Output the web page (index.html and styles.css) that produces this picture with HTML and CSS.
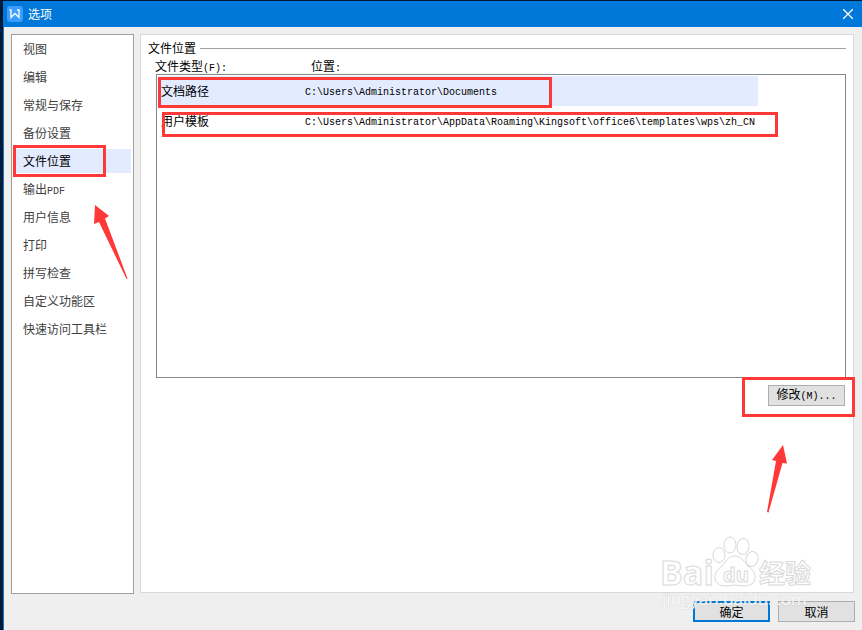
FILE: index.html
```html
<!DOCTYPE html>
<html lang="zh-CN">
<head>
<meta charset="utf-8">
<title>选项</title>
<link rel="stylesheet" href="styles.css">
</head>
<body>
<div class="dialog">
  <header class="titlebar">
    <svg class="logo" viewBox="0 0 16 16" aria-hidden="true">
      <rect width="16" height="16" rx="3" fill="#3b9dff"/>
      <path d="M2.500 4H4v7.500L8 7.500l4 4V4h-2" fill="none" stroke="#fff" stroke-width="1.3"/>
    </svg>
    <h1 class="title">选项</h1>
    <button class="close" type="button" aria-label="关闭">
      <svg viewBox="0 0 10 10" aria-hidden="true"><path d="M0 0L10 10M10 0L0 10" stroke="#fff" stroke-width="1.3"/></svg>
    </button>
  </header>

  <main class="content">
    <nav class="nav">
      <a class="nav-item" href="#">视图</a>
      <a class="nav-item" href="#">编辑</a>
      <a class="nav-item" href="#">常规与保存</a>
      <a class="nav-item" href="#">备份设置</a>
      <a class="nav-item selected" href="#">文件位置<span class="mark mark-nav"></span></a>
      <a class="nav-item" href="#">输出<span class="latin">PDF</span></a>
      <a class="nav-item" href="#">用户信息</a>
      <a class="nav-item" href="#">打印</a>
      <a class="nav-item" href="#">拼写检查</a>
      <a class="nav-item" href="#">自定义功能区</a>
      <a class="nav-item" href="#">快速访问工具栏</a>
      <svg class="arrow arrow-nav" viewBox="0 0 34 75" aria-hidden="true"><path d="M1 0L15 11L11 13.500L33.500 73.500L32.500 74L5 17L0 19Z" fill="#ff3838"/></svg>
    </nav>

    <section class="panel">
      <h2 class="group-title">文件位置</h2>
      <div class="columns">
        <span id="col-type">文件类型<span class="latin">(F):</span></span>
        <span id="col-path">位置<span class="latin">:</span></span>
      </div>
      <div class="list">
        <table class="files" aria-labelledby="col-type col-path">
          <tbody>
            <tr class="selected">
              <td class="type">文档路径<span class="mark mark-first"></span></td>
              <td><span class="latin">C:\Users\Administrator\Documents</span></td>
            </tr>
            <tr>
              <td class="type">用户模板<span class="mark mark-second"></span></td>
              <td><span class="latin">C:\Users\Administrator\AppData\Roaming\Kingsoft\office6\templates\wps\zh_CN</span></td>
            </tr>
          </tbody>
        </table>
      </div>
      <div class="actions">
        <button class="button" type="button">修改<span class="latin">(M)...</span></button>
        <span class="mark mark-action"></span>
        <svg class="arrow arrow-action" viewBox="0 0 20 68" aria-hidden="true"><path d="M16 0L20 18.500L15.500 18L1.500 67.500L0 67L9 16L5 15Z" fill="#ff3838"/></svg>
      </div>
    </section>
  </main>

  <footer class="footer">
    <button class="button primary" type="button">确定</button>
    <button class="button" type="button">取消</button>
    <svg class="watermark" viewBox="0 0 160 80" aria-hidden="true">
      <g class="outline">
        <text class="brand" x="2" y="49">Bai</text>
        <ellipse cx="61" cy="19" rx="6" ry="7.500"/>
        <ellipse cx="72" cy="9" rx="6" ry="8"/>
        <ellipse cx="85" cy="10.500" rx="6" ry="8" transform="rotate(8 85 10.500)"/>
        <ellipse cx="94" cy="23" rx="6" ry="7.500" transform="rotate(15 94 23)"/>
        <path d="M77 20c7 0 9 6 13 10c5 4 8 8 7 13c-2 7-8 8-20 6c-12 2-18 1-20-6c-1-5 2-9 7-13c4-4 6-10 13-10Z"/>
        <text class="du" x="65" y="46">du</text>
        <text class="cjk" x="101" y="47">经验</text>
      </g>
      <text class="site" x="4" y="69">jingyan.baidu.com</text>
    </svg>
  </footer>
</div>
</body>
</html>
```
FILE: styles.css
```css
* { box-sizing: border-box; }

body {
  margin: 0;
  background: #001936;
  color: #000;
  font: 12px/16px "Noto Sans CJK SC", sans-serif;
  overflow: hidden;
}

.dialog {
  display: flex;
  flex-direction: column;
  min-height: 100vh;
  border-top: 1px solid #001936;
  border-left: 3px solid #001936;
  background: #efefef;
  box-shadow: inset 1px 0 #1474c4;
}

.latin {
  font-family: "Liberation Mono", monospace;
  font-size: 10px;
}

.titlebar {
  display: flex;
  align-items: center;
  height: 26px;
  padding: 0 9px 0 4px;
  background: #0078d9;
  color: #fff;
}

.logo { width: 16px; height: 16px; }

.title {
  flex: 1;
  margin: 0 0 0 5px;
  font-size: 12px;
  font-weight: normal;
}

.close {
  display: flex;
  padding: 0;
  border: 0;
  background: none;
}

.close svg { width: 10px; height: 10px; }

.content {
  display: flex;
  flex: 1;
  gap: 6px;
  padding: 7px 8px 0;
}

.nav {
  position: relative;
  flex: 0 0 123px;
  padding: 2px;
  border: 1px solid #a0a0a0;
  background: #fff;
}

.nav-item {
  position: relative;
  display: block;
  height: 24px;
  margin-bottom: 4px;
  padding-left: 9px;
  color: #404040;
  line-height: 24px;
  text-decoration: none;
}

.nav-item.selected { background: #e3ecff; color: #000; }

.panel {
  flex: 1;
  min-width: 0;
  margin-bottom: 1px;
  padding: 5px 7px;
  border: 1px solid #d9d9d9;
  background: #fff;
}

.group-title {
  display: flex;
  align-items: center;
  gap: 4px;
  margin: 0;
  font-size: 12px;
  font-weight: normal;
}

.group-title::after {
  content: "";
  flex: 1;
  height: 1px;
  background: #a0a0a0;
}

.columns {
  display: grid;
  grid-template-columns: 156px 1fr;
  height: 18px;
  padding: 2px 0 0 7px;
}

.list {
  min-height: 304px;
  margin-left: 8px;
  padding: 1px;
  border: 1px solid #828790;
}

.files { border-collapse: collapse; }

.files td {
  height: 30px;
  padding: 0 3px;
  white-space: nowrap;
}

.files .type {
  position: relative;
  width: 144px;
}

.files .selected { background: #e3ecff; }

.actions {
  position: relative;
  display: flex;
  justify-content: flex-end;
  padding: 7px 1px 0 0;
}

.button {
  width: 77px;
  height: 21px;
  padding: 0;
  border: 1px solid #adadad;
  background: #e1e1e1;
  color: #000;
  font-family: inherit;
  font-size: 12px;
  line-height: 16px;
}

.button.primary { border: 2px solid #0078d7; }

.footer {
  position: relative;
  display: flex;
  justify-content: flex-end;
  gap: 8px;
  padding: 7px 7px 8px;
}

.mark {
  position: absolute;
  border: 3px solid #ff3838;
  pointer-events: none;
}

.mark-nav { left: -1px; top: -4px; width: 93px; height: 32px; }
.mark-first { left: 0; top: 1px; width: 394px; height: 31px; }
.mark-second { left: 4px; top: 6px; width: 616px; height: 25px; }
.mark-action { right: -9px; top: -1px; width: 113px; height: 40px; }

.arrow { position: absolute; pointer-events: none; }
.arrow-nav { left: 82px; top: 170px; width: 34px; height: 75px; }
.arrow-action { right: 59px; top: 67px; width: 20px; height: 68px; }

.watermark {
  position: absolute;
  right: 44px;
  bottom: 14px;
  width: 160px;
  height: 80px;
  overflow: visible;
  pointer-events: none;
}

.outline {
  fill: #fff;
  stroke: #d9d9d9;
  stroke-width: 1;
}

.brand { font: bold 34px "Open Sans", sans-serif; }
.du { font: bold 20px "Open Sans", sans-serif; }
.cjk { font: bold 26px "Noto Sans CJK SC", sans-serif; }

.site {
  font: 17px "Open Sans", sans-serif;
  fill: #fff;
  fill-opacity: 0.8;
  stroke: #d0d0d0;
  stroke-opacity: 0.6;
  stroke-width: 1;
  paint-order: stroke;
}
```
